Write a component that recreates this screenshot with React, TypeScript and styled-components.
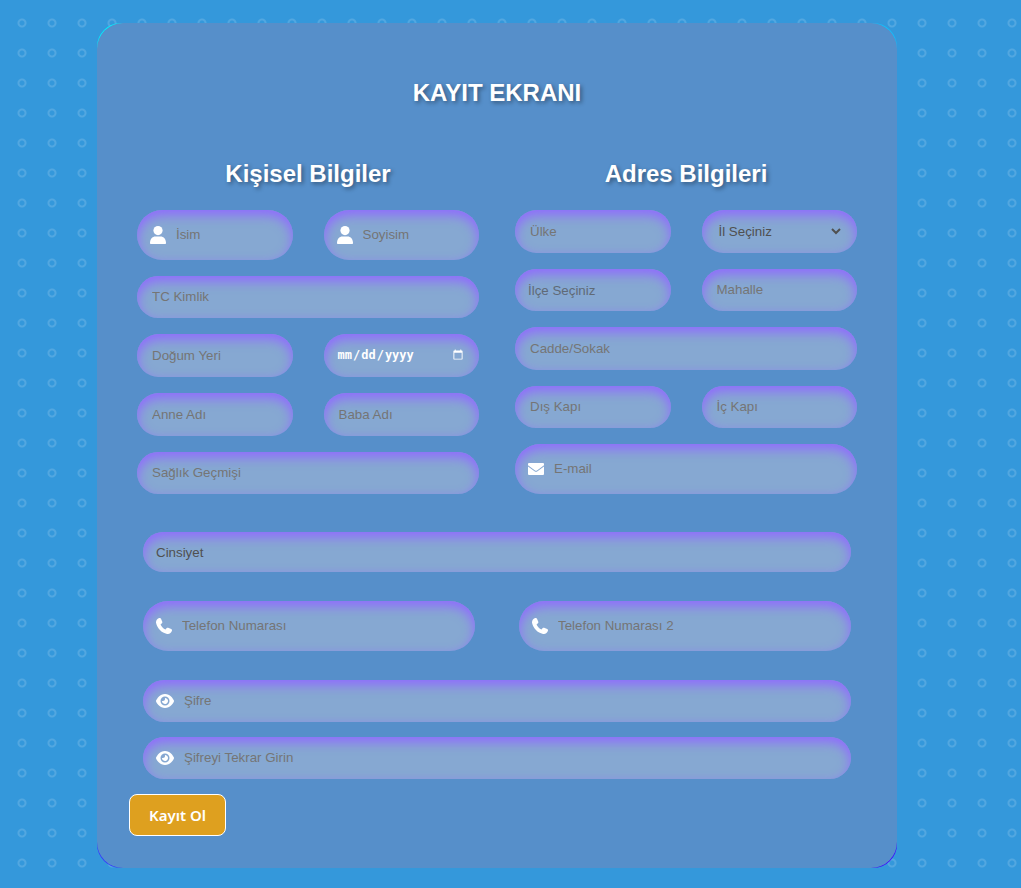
import React from "react";
import styled, { createGlobalStyle } from "styled-components";
import { FaEye } from "react-icons/fa6";

const GlobalStyle = createGlobalStyle`
  *, *::before, *::after { box-sizing: border-box; }
  body {
    margin: 0;
    font-family: "Liberation Sans", Arial, sans-serif;
    background-color: #3498db;
    background-image: radial-gradient(
      circle at 22px 23px,
      transparent 2px,
      rgba(255, 255, 255, 0.15) 3px,
      rgba(255, 255, 255, 0.15) 4px,
      transparent 5px
    );
    background-size: 30px 30px;
  }
`;

const Page = styled.main`
  display: flex;
  justify-content: center;
  padding: 23px 27px 20px 0;
`;

const Frame = styled.div`
  width: 100%;
  max-width: 800px;
  border-radius: 24px;
  background: linear-gradient(165deg, #00f4ff, #4000ff);
`;

const Card = styled.form`
  border-radius: 26px;
  padding: 56px 32px 32px;
  background: #568fca;
`;

const Title = styled.h1`
  margin: 0;
  font-size: 24px;
  line-height: 28px;
  font-weight: 700;
  text-align: center;
  color: #fff;
  text-shadow: 2px 2px 4px rgba(0, 0, 0, 0.4);
`;

const Columns = styled.div`
  display: grid;
  grid-template-columns: 1fr 1fr;
  gap: 36px;
  margin: 53px 8px 0;
`;

const Column = styled.section`
  display: flex;
  flex-direction: column;
  gap: 16px;
`;

const SectionTitle = styled(Title).attrs({ as: "h2" })`
  margin-bottom: 6px;
`;

const Row = styled.div<{ $gap?: number }>`
  display: grid;
  grid-template-columns: 1fr 1fr;
  gap: ${(p) => p.$gap ?? 31}px;
`;

const Lower = styled.div`
  display: flex;
  flex-direction: column;
  gap: 29px;
  margin: 38px 14px 15px;
`;

const Passwords = styled.div`
  display: flex;
  flex-direction: column;
  gap: 15px;
`;

const Shell = styled.label<{ $height: number; $pad: number }>`
  display: flex;
  align-items: center;
  gap: 10px;
  min-width: 0;
  height: ${(p) => p.$height}px;
  padding: 0 ${(p) => p.$pad}px;
  border-radius: 25px;
  color: #fff;
  background: rgba(245, 230, 228, 0.3);
  box-shadow: inset 0 5px 12px #9069ff;

  svg {
    flex: none;
  }
`;

const TextInput = styled.input`
  flex: 1;
  min-width: 0;
  padding: 0 0 1px;
  border: 0;
  outline: 0;
  color: #fff;
  background: transparent;
  font-family: inherit;

  &::placeholder {
    color: #757575;
  }
`;

const DateInput = styled(TextInput)`
  color-scheme: dark;
  font-family: "DejaVu Sans Mono", monospace;
  font-size: 12px;
  font-weight: 700;
`;

const Select = styled.select<{ $plain?: boolean }>`
  flex: 1;
  min-width: 0;
  padding: 0;
  border: 0;
  outline: 0;
  color: #505050;
  background: transparent;
  font-family: inherit;
  ${(p) => p.$plain && "appearance: none;"}

  &:disabled {
    color: #505050;
    opacity: 0.7;
  }
`;

const Submit = styled.button`
  display: block;
  height: 42px;
  padding: 0 19px;
  border: 1px solid #fff;
  border-radius: 8px;
  color: #fff;
  background: #dea01f;
  font-family: "Noto Sans", sans-serif;
  font-size: 15px;
  font-weight: 600;
  cursor: pointer;
`;

const EyeIcon = styled(FaEye)`
  width: 18px;
  height: 16px;
`;

const UserIcon = () => (
  <svg width="16" height="18" viewBox="0 0 16 18" fill="currentColor" aria-hidden="true">
    <circle cx="8" cy="4.6" r="4.6" />
    <path d="M0 17.2C0 13.2 2.2 10.6 5.6 10.6h4.8c3.4 0 5.6 2.6 5.6 6.6 0 .5-.3.8-.8.8H.8c-.5 0-.8-.3-.8-.8z" />
  </svg>
);

const MailIcon = () => (
  <svg width="16" height="12" viewBox="0 0 16 12" fill="currentColor" aria-hidden="true">
    <path d="M1 0h14a1 1 0 0 1 1 1v1.3L9 7.5a1.7 1.7 0 0 1-2 0L0 2.300V1a1 1 0 0 1 1-1z" />
    <path d="M0 3.400 6.500 8.300a2.500 2.500 0 0 0 3 0L16 3.400V11a1 1 0 0 1-1 1H1a1 1 0 0 1-1-1z" />
  </svg>
);

const PhoneIcon = () => (
  <svg width="16" height="16" viewBox="0 0 512 512" fill="currentColor" aria-hidden="true">
    <path d="M160.2 25C152.3 6.1 131.7-3.9 112.1 1.4l-5.500 1.500c-64.600 17.600-119.800 80.200-103.700 156.400 37.100 175 174.800 312.700 349.800 349.800 76.300 16.200 138.800-39.100 156.400-103.700l1.500-5.500c5.400-19.700-4.700-40.300-23.500-48.100l-97.300-40.500c-16.500-6.900-35.600-2.100-47 11.800l-38.600 47.200C233.900 335.400 177.300 277 144.800 205.300L189 169.300c13.900-11.300 18.600-30.400 11.800-47L160.200 25z" />
  </svg>
);

type FieldProps = {
  label: string;
  icon?: React.ReactNode;
  type?: string;
  height?: number;
};

function Field({ label, icon, type = "text", height = 42 }: FieldProps) {
  return (
    <Shell $height={height} $pad={icon ? 13 : 15}>
      {icon}
      <TextInput type={type} placeholder={label} aria-label={label} />
    </Shell>
  );
}

export default function App() {
  return (
    <>
      <GlobalStyle />
      <Page>
        <Frame>
          <Card onSubmit={(e) => e.preventDefault()}>
            <Title>KAYIT EKRANI</Title>
            <Columns>
              <Column>
                <SectionTitle>Kişisel Bilgiler</SectionTitle>
                <Row>
                  <Field label="İsim" icon={<UserIcon />} height={50} />
                  <Field label="Soyisim" icon={<UserIcon />} height={50} />
                </Row>
                <Field label="TC Kimlik" />
                <Row>
                  <Field label="Doğum Yeri" height={43} />
                  <Shell $height={43} $pad={13}>
                    <DateInput type="date" aria-label="Doğum Tarihi" />
                  </Shell>
                </Row>
                <Row>
                  <Field label="Anne Adı" height={43} />
                  <Field label="Baba Adı" height={43} />
                </Row>
                <Field label="Sağlık Geçmişi" />
              </Column>
              <Column>
                <SectionTitle>Adres Bilgileri</SectionTitle>
                <Row>
                  <Field label="Ülke" height={43} />
                  <Shell $height={43} $pad={13}>
                    <Select aria-label="İl">
                      <option>İl Seçiniz</option>
                    </Select>
                  </Shell>
                </Row>
                <Row>
                  <Shell $height={42} $pad={13}>
                    <Select $plain disabled aria-label="İlçe">
                      <option>İlçe Seçiniz</option>
                    </Select>
                  </Shell>
                  <Field label="Mahalle" />
                </Row>
                <Field label="Cadde/Sokak" height={43} />
                <Row>
                  <Field label="Dış Kapı" />
                  <Field label="İç Kapı" />
                </Row>
                <Field label="E-mail" type="email" icon={<MailIcon />} height={50} />
              </Column>
            </Columns>
            <Lower>
              <Shell $height={40} $pad={13}>
                <Select $plain aria-label="Cinsiyet">
                  <option>Cinsiyet</option>
                </Select>
              </Shell>
              <Row $gap={44}>
                <Field label="Telefon Numarası" type="tel" icon={<PhoneIcon />} height={50} />
                <Field label="Telefon Numarası 2" type="tel" icon={<PhoneIcon />} height={50} />
              </Row>
              <Passwords>
                <Field label="Şifre" type="password" icon={<EyeIcon />} />
                <Field label="Şifreyi Tekrar Girin" type="password" icon={<EyeIcon />} />
              </Passwords>
            </Lower>
            <Submit type="submit">Kayıt Ol</Submit>
          </Card>
        </Frame>
      </Page>
    </>
  );
}
